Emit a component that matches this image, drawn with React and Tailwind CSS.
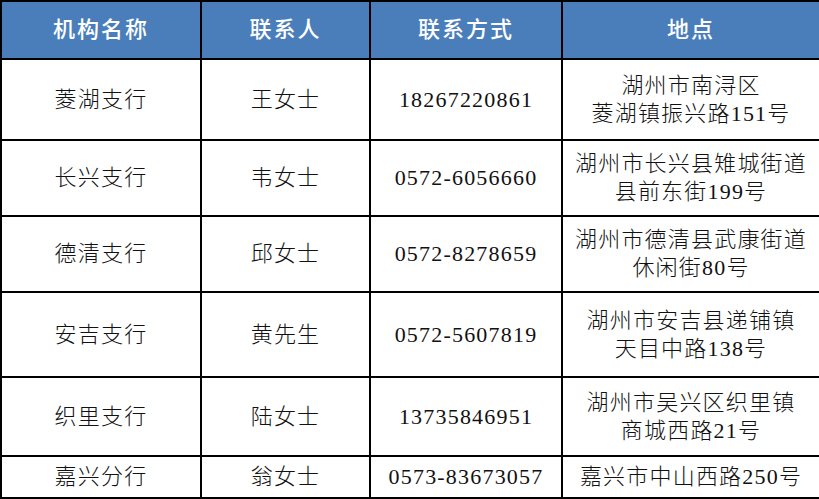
import React from "react";

const rows = [
  { org: "菱湖支行", person: "王女士", phone: "18267220861", addr: ["湖州市南浔区", "菱湖镇振兴路151号"], h: "h-[81px]" },
  { org: "长兴支行", person: "韦女士", phone: "0572-6056660", addr: ["湖州市长兴县雉城街道", "县前东街199号"], h: "h-[76px]" },
  { org: "德清支行", person: "邱女士", phone: "0572-8278659", addr: ["湖州市德清县武康街道", "休闲街80号"], h: "h-[76px]" },
  { org: "安吉支行", person: "黄先生", phone: "0572-5607819", addr: ["湖州市安吉县递铺镇", "天目中路138号"], h: "h-[85px]" },
  { org: "织里支行", person: "陆女士", phone: "13735846951", addr: ["湖州市吴兴区织里镇", "商城西路21号"], h: "h-[79px]" },
  { org: "嘉兴分行", person: "翁女士", phone: "0573-83673057", addr: ["嘉兴市中山西路250号"], h: "h-[42px]" },
];

export default function App() {
  const cell = "border-2 border-black text-center align-middle p-0";
  return (
    <div className="w-[819px] h-[499px] bg-white overflow-hidden">
      <table
        className="w-[819px] table-fixed border-collapse text-[22px] tracking-[1.2px] text-[#111] leading-[28px] font-light"
        style={{ fontFamily: '"Liberation Serif", "Noto Sans CJK SC", serif' }}
      >
        <colgroup>
          <col className="w-[200px]" />
          <col className="w-[169px]" />
          <col className="w-[192px]" />
          <col className="w-[258px]" />
        </colgroup>
        <thead>
          <tr className="h-[58px] bg-[#4a7ebb] text-white">
            <th className={cell + " font-medium tracking-[2px]"}>机构名称</th>
            <th className={cell + " font-medium tracking-[2px]"}>联系人</th>
            <th className={cell + " font-medium tracking-[2px]"}>联系方式</th>
            <th className={cell + " font-medium tracking-[2px]"}>地点</th>
          </tr>
        </thead>
        <tbody>
          {rows.map((r) => (
            <tr key={r.org} className={r.h}>
              <td className={cell}>{r.org}</td>
              <td className={cell}>{r.person}</td>
              <td className={cell}>{r.phone}</td>
              <td className={cell}>
                {r.addr.map((line) => (
                  <div key={line}>{line}</div>
                ))}
              </td>
            </tr>
          ))}
        </tbody>
      </table>
    </div>
  );
}
